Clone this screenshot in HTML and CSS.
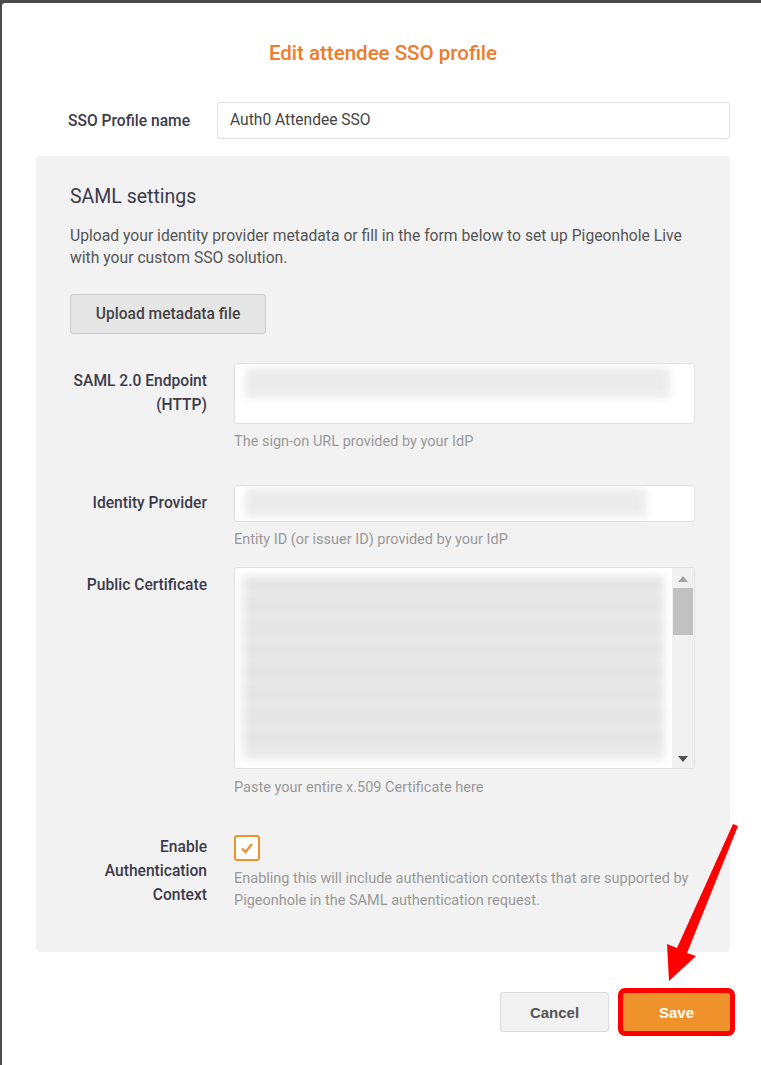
FILE: index.html
```html
<!DOCTYPE html>
<html>
	<head>
		<meta charset="UTF-8">
		<title>Edit attendee SSO profile</title>
		<link rel="stylesheet" href="styles.css">
	</head>
	<body>
		<!--弹窗-->
		<div class="modal">
			<h2 class="modal-title">Edit attendee SSO profile</h2>

			<div class="name-row">
				<label class="name-label">SSO Profile name</label>
				<div class="text-input">Auth0 Attendee SSO</div>
			</div>

			<!--SAML设置区域-->
			<div class="panel">
				<h3 class="panel-title">SAML settings</h3>
				<p class="panel-desc">Upload your identity provider metadata or fill in the form below to set up Pigeonhole Live with your custom SSO solution.</p>
				<button class="btn-upload">Upload metadata file</button>

				<div class="field field-endpoint">
					<label class="field-label">SAML 2.0 Endpoint (HTTP)</label>
					<div class="field-body">
						<div class="text-input tall">
							<div class="blur-line wide"></div>
						</div>
						<p class="help">The sign-on URL provided by your IdP</p>
					</div>
				</div>

				<div class="field field-idp">
					<label class="field-label">Identity Provider</label>
					<div class="field-body">
						<div class="text-input">
							<div class="blur-line"></div>
						</div>
						<p class="help">Entity ID (or issuer ID) provided by your IdP</p>
					</div>
				</div>

				<div class="field field-cert">
					<label class="field-label">Public Certificate</label>
					<div class="field-body">
						<div class="cert-box">
							<div class="cert-text">
								<div class="blur-block"></div>
							</div>
							<!--假滚动条-->
							<div class="scrollbar">
								<span class="arrow-up"></span>
								<span class="thumb"></span>
								<span class="arrow-down"></span>
							</div>
						</div>
						<p class="help">Paste your entire x.509 Certificate here</p>
					</div>
				</div>

				<div class="field field-auth">
					<label class="field-label">Enable Authentication Context</label>
					<div class="field-body">
						<span class="checkbox">
							<svg width="16" height="14" viewBox="0 0 16 14"><path d="M3 7.5 L6.5 11 L13 3" fill="none" stroke="#f0922b" stroke-width="2.4"/></svg>
						</span>
						<p class="help help-long">Enabling this will include authentication contexts that are supported by Pigeonhole in the SAML authentication request.</p>
					</div>
				</div>
			</div>

			<div class="actions">
				<button class="btn-cancel">Cancel</button>
				<button class="btn-save">Save</button>
			</div>
		</div>

		<!--红色箭头标注-->
		<svg class="annot-arrow" width="761" height="1065" viewBox="0 0 761 1065">
			<polygon points="669,981 667,944 677,948 733,824 738,826 687,953 696,956" fill="#ff0000"/>
		</svg>
	</body>
</html>
```

FILE: styles.css
```css
*{
	margin: 0;
	padding: 0;
	box-sizing: border-box;
}
body{
	background-color: #4b4b4b;
	font-family: Roboto, "Liberation Sans", sans-serif;
	color: #3b3b4a;
	overflow: hidden;
}
.modal{
	margin: 3px 0 0 2px;
	height: 1062px;
	background-color: #fff;
	border-radius: 3px 0 0 0;
	padding: 38px 31px 0 34px;
}
.modal-title{
	text-align: center;
	font-size: 20.5px;
	font-weight: 500;
	line-height: 24px;
	color: #f07b2c;
}
.name-row{
	display: flex;
	align-items: center;
	margin-top: 37px;
}
.name-label{
	width: 154px;
	text-align: right;
	font-size: 15.6px;
	font-weight: 500;
	margin-right: 27px;
}
.text-input{
	flex: 1;
	height: 37px;
	background-color: #fff;
	border: 1px solid #e1e1e1;
	border-radius: 3px;
	font-size: 15.6px;
	line-height: 35px;
	padding: 0 12px;
	color: #444;
	overflow: hidden;
}
/*灰色面板*/
.panel{
	margin-top: 17px;
	background-color: #f2f2f2;
	border-radius: 4px;
	padding: 28px 35px 40px 34px;
}
.panel-title{
	font-size: 19.5px;
	font-weight: 400;
	line-height: 26px;
	color: #3b3b4a;
}
.panel-desc{
	margin-top: 15px;
	font-size: 15.7px;
	line-height: 22px;
	color: #555;
}
.btn-upload{
	margin-top: 25px;
	width: 196px;
	height: 40px;
	background-color: #e6e6e6;
	border: 1px solid #cbcbcb;
	border-radius: 3px;
	font-family: inherit;
	font-size: 15.6px;
	font-weight: 500;
	color: #444;
}
.field{
	display: grid;
	grid-template-columns: 137px 1fr;
	column-gap: 27px;
}
.field-label{
	text-align: right;
	font-size: 15.6px;
	font-weight: 500;
	line-height: 24px;
	padding-top: 6px;
}
.field-endpoint{ margin-top: 29px; }
.field-idp{ margin-top: 33px; }
.field-cert{ margin-top: 17px; }
.field-auth{ margin-top: 37px; }
.field-auth .field-label{ padding-top: 0; }
.text-input.tall{
	height: 61px;
	padding: 4px 24px 0 10px;
}
.field-idp .text-input{
	padding: 3px 48px 0 10px;
}
.blur-line{
	height: 28px;
	background-color: #ebebeb;
	filter: blur(4px);
}
.blur-line.wide{
	height: 30px;
}
.help{
	margin-top: 8px;
	font-size: 14.5px;
	line-height: 20px;
	color: #999;
}
.field-cert .help{ margin-top: 9px; }
.help-long{
	margin-top: 7px;
	line-height: 22px;
}
/*证书文本框*/
.cert-box{
	height: 202px;
	display: flex;
	background-color: #fff;
	border: 1px solid #e1e1e1;
	border-radius: 3px;
	overflow: hidden;
}
.cert-text{
	flex: 1;
	padding: 8px 8px 10px 8px;
}
.blur-block{
	height: 100%;
	background: repeating-linear-gradient(#e4e4e4 0, #e4e4e4 15px, #ebebeb 15px, #ebebeb 22px);
	filter: blur(5px);
}
.scrollbar{
	width: 22px;
	background-color: #f1f1f1;
	display: flex;
	flex-direction: column;
	align-items: center;
	padding: 8px 0 6px;
}
.arrow-up{
	width: 0;
	height: 0;
	border-left: 5px solid transparent;
	border-right: 5px solid transparent;
	border-bottom: 6px solid #a3a3a3;
}
.thumb{
	margin-top: 6px;
	width: 20px;
	height: 47px;
	background-color: #c1c1c1;
}
.arrow-down{
	margin-top: auto;
	width: 0;
	height: 0;
	border-left: 5px solid transparent;
	border-right: 5px solid transparent;
	border-top: 6px solid #505050;
}
.checkbox{
	display: flex;
	align-items: center;
	justify-content: center;
	width: 26px;
	height: 26px;
	border: 2px solid #f0922b;
	border-radius: 3px;
	background-color: #fff;
}
/*底部按钮*/
.actions{
	display: flex;
	justify-content: flex-end;
	gap: 13px;
	margin-top: 40px;
	margin-right: -1px;
}
.btn-cancel,
.btn-save{
	height: 40px;
	border-radius: 3px;
	font-family: "Liberation Sans", Roboto, sans-serif;
	font-size: 15px;
	font-weight: 700;
}
.btn-cancel{
	width: 109px;
	background-color: #f2f2f2;
	border: 1px solid #dcdcdc;
	color: #555;
}
.btn-save{
	width: 109px;
	background-color: #f0922b;
	border: 1px solid #e8862a;
	color: #fff;
	/*红框标注*/
	outline: 5px solid #ff0000;
	outline-offset: -1px;
}
.annot-arrow{
	position: absolute;
	left: 0;
	top: 0;
	pointer-events: none;
}
```
